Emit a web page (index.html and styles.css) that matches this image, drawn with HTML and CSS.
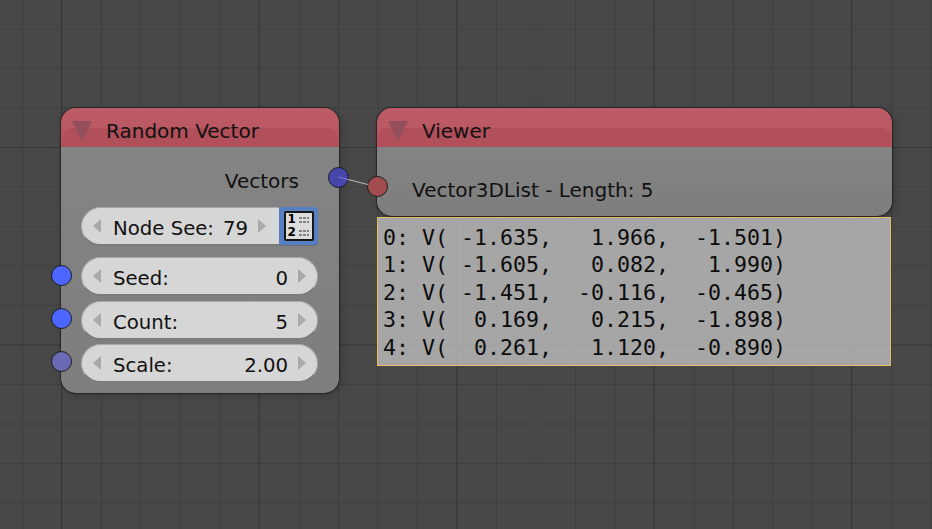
FILE: index.html
```html
<!DOCTYPE html>
<html lang="en">
<head>
<meta charset="utf-8">
<title>Node editor</title>
<link rel="stylesheet" href="styles.css">
</head>
<body>
<main class="canvas">
  <section class="node node-random">
    <header class="node-head"><span class="collapse"></span><h2 class="node-title">Random Vector</h2></header>
    <div class="node-body">
      <div class="output-label">Vectors</div>
      <div class="seed-row">
        <div class="field field-joined"><span class="arrow arrow-l"></span><span class="field-label">Node See:</span><span class="field-value-tight">79</span><span class="arrow arrow-r"></span></div>
        <div class="toggle">
          <div class="toggle-icon">
            <span class="icon-row"><b class="icon-num">1</b><span class="icon-lines"></span></span>
            <span class="icon-row"><b class="icon-num">2</b><span class="icon-lines"></span></span>
          </div>
        </div>
      </div>
      <div class="fields">
        <div class="field"><span class="arrow arrow-l"></span><span class="field-label">Seed:</span><span class="field-value">0</span><span class="arrow arrow-r"></span></div>
        <div class="field"><span class="arrow arrow-l"></span><span class="field-label">Count:</span><span class="field-value">5</span><span class="arrow arrow-r"></span></div>
        <div class="field"><span class="arrow arrow-l"></span><span class="field-label">Scale:</span><span class="field-value">2.00</span><span class="arrow arrow-r"></span></div>
      </div>
    </div>
    <span class="socket socket-out"></span>
    <span class="socket socket-seed"></span>
    <span class="socket socket-count"></span>
    <span class="socket socket-scale"></span>
  </section>

  <section class="node node-viewer">
    <header class="node-head"><span class="collapse"></span><h2 class="node-title">Viewer</h2></header>
    <div class="node-body viewer-body">Vector3DList - Length: 5</div>
    <span class="socket socket-in"></span>
  </section>

  <pre class="readout">0: V( -1.635,   1.966,  -1.501)
1: V( -1.605,   0.082,   1.990)
2: V( -1.451,  -0.116,  -0.465)
3: V(  0.169,   0.215,  -1.898)
4: V(  0.261,   1.120,  -0.890)</pre>

  <svg class="link" width="932" height="529" viewBox="0 0 932 529" aria-hidden="true">
    <line x1="348" y1="179.5" x2="368" y2="184.5" stroke="#b4b4b4" stroke-width="1.2"/>
    <line x1="338" y1="177" x2="348" y2="179.5" stroke="#7f7fc4" stroke-width="1"/>
  </svg>
</main>
</body>
</html>
```
FILE: styles.css
```css
* { box-sizing: border-box; }
html, body { margin: 0; padding: 0; }
body { width: 932px; height: 529px; overflow: hidden; }

.canvas {
  position: relative;
  width: 932px;
  height: 529px;
  overflow: hidden;
  background-color: #484848;
  background-image:
    linear-gradient(to right, #383838 1px, transparent 1px),
    linear-gradient(to bottom, #383838 1px, transparent 1px),
    linear-gradient(to right, #3f3f3f 1px, transparent 1px),
    linear-gradient(to bottom, #3f3f3f 1px, transparent 1px);
  background-size: 197.5px 100%, 100% 197.5px, 39.5px 100%, 100% 39.5px;
  background-position: 61px 0, 0 147px, 22px 0, 0 28.5px;
  font-family: "DejaVu Sans", sans-serif;
  color: #111;
}

.node {
  position: absolute;
  border-radius: 15px;
  box-shadow: 0 0 1px 1px rgba(25, 25, 25, .7), 2px 3px 8px rgba(0, 0, 0, .2);
}
.node-random { left: 61px; top: 108px; width: 278px; height: 285px; }
.node-viewer { left: 377px; top: 108px; width: 515px; height: 108px; }

.node-head {
  position: relative;
  display: flex;
  align-items: center;
  height: 39px;
  padding: 6px 0 0 11px;
  border-radius: 15px 15px 0 0;
  background: linear-gradient(to bottom, rgba(196, 92, 105, .95), rgba(188, 86, 98, .95));
}
.node-head::before {
  content: "";
  position: absolute;
  left: 1px;
  right: 1px;
  top: 20px;
  bottom: 0;
  border-radius: 10px 10px 0 0;
  background: rgba(177, 78, 90, .97);
}
.collapse {
  position: relative;
  width: 0; height: 0;
  border-left: 10px solid transparent;
  border-right: 10px solid transparent;
  border-top: 20px solid #94505a;
}
.node-title { position: relative; margin: 0 0 0 14px; font-size: 20px; font-weight: 400; line-height: 1; }

.node-body {
  height: calc(100% - 39px);
  border-radius: 0 0 15px 15px;
  background: linear-gradient(to bottom, rgba(136, 136, 136, .94), rgba(129, 129, 129, .94));
}
.node-random .node-body { padding: 20px 21px 0 20px; }
.viewer-body { padding: 31px 0 0 35px; font-size: 20px; line-height: 24px; }

.output-label { text-align: right; padding: 2px 19px 0 0; font-size: 20px; line-height: 25px; height: 40px; }

.seed-row { display: flex; height: 39px; margin-bottom: 11px; }
.fields { display: flex; flex-direction: column; gap: 4.5px; }

.field {
  position: relative;
  display: flex;
  align-items: center;
  width: 237px;
  height: 39px;
  padding: 5px 29px 0 31px;
  border-radius: 19.5px;
  background: #d6d6d6;
  border: 1px solid #a8a8a8;
  border-bottom: 2px solid #7b7b7b;
  font-size: 19.7px;
  white-space: nowrap;
}
.field-joined { width: 198px; border-radius: 19.5px 0 0 19.5px; border-right: 0; }
.field-label { flex: 1; }
.field-joined .field-label { flex: none; }
.field-value-tight { margin-left: 9px; }
.arrow { position: absolute; top: 11px; width: 0; height: 0; border-top: 7px solid transparent; border-bottom: 7px solid transparent; }
.arrow-l { left: 11px; border-right: 8px solid #a9a9a9; }
.arrow-r { right: 11px; border-left: 8px solid #a9a9a9; }
.field-joined .arrow-r { right: 13px; }

.toggle {
  width: 39px;
  height: 39px;
  display: flex;
  align-items: center;
  justify-content: center;
  background: #5680c2;
  border-radius: 0 4px 4px 0;
  border-bottom: 1px solid #6d6d6d;
}
.toggle-icon {
  width: 30px;
  height: 30px;
  display: flex;
  flex-direction: column;
  justify-content: center;
  gap: 2px;
  padding: 0 3px 0 2px;
  background: #dcdcdc;
  border: 2px solid #161616;
  border-radius: 2px;
}
.icon-row { display: flex; align-items: center; height: 11px; gap: 3px; }
.icon-num { width: 8px; font-size: 12px; line-height: 11px; font-weight: 700; color: #000; }
.icon-lines {
  flex: 1;
  height: 6px;
  background:
    repeating-linear-gradient(to right, transparent 0, transparent 3px, #dcdcdc 3px, #dcdcdc 4px),
    linear-gradient(to bottom, #808080 0, #808080 2px, transparent 2px, transparent 4px, #808080 4px);
}

.socket {
  position: absolute;
  width: 21px;
  height: 21px;
  border-radius: 50%;
  border: 1px solid #1b1b1b;
}
.socket-out { left: 267px; top: 59px; background: #4545ab; }
.socket-seed { left: -10px; top: 157px; background: #4c66ff; }
.socket-count { left: -10px; top: 200px; background: #4c66ff; }
.socket-scale { left: -10px; top: 243px; background: #6a6ab4; }
.socket-in { left: -10px; top: 68px; background: #a34c50; }

.readout {
  position: absolute;
  left: 377px;
  top: 217px;
  width: 514px;
  height: 149px;
  margin: 0;
  padding: 5.6px 0 0 5px;
  background: rgba(190, 190, 190, .8);
  border: 1px solid #e6bd60;
  font-family: "DejaVu Sans Mono", monospace;
  font-size: 21.6px;
  line-height: 27.5px;
  color: #0c0c0c;
}

.link { position: absolute; left: 0; top: 0; pointer-events: none; }
```
